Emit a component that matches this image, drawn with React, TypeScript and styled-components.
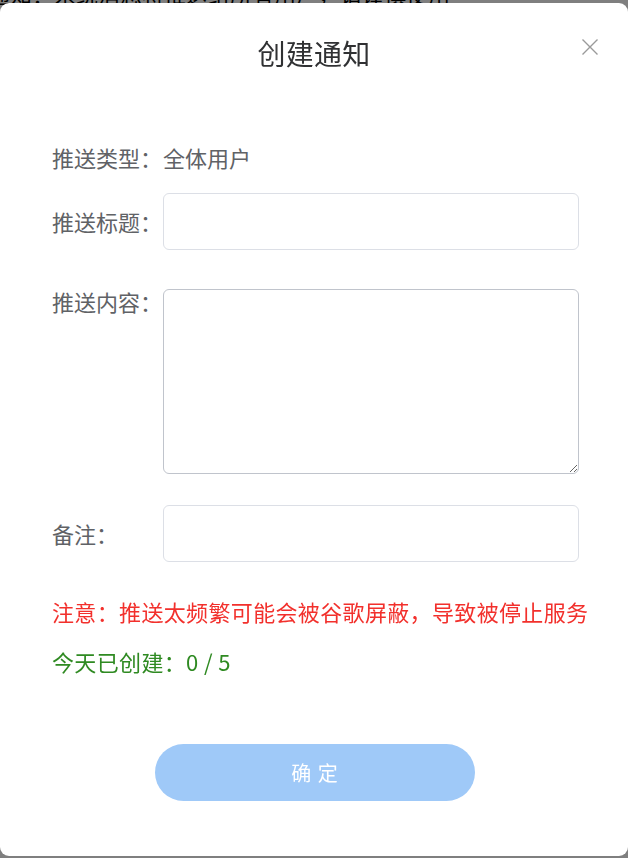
import React, { useState } from 'react';
import styled, { createGlobalStyle } from 'styled-components';

const GlobalStyle = createGlobalStyle`
  html, body {
    margin: 0;
    padding: 0;
    background: #ffffff;
  }
  body {
    font-family: "Noto Sans CJK SC", "Noto Sans", "Liberation Sans", sans-serif;
  }
  * {
    box-sizing: border-box;
  }
`;

const Page = styled.div`
  width: 628px;
  height: 858px;
  overflow: hidden;
  position: relative;
`;

const PageText = styled.div`
  margin: -18px 0 0 -12px;
  font-size: 22px;
  line-height: 22px;
  color: #000;
  white-space: nowrap;
`;

const Overlay = styled.div`
  position: fixed;
  inset: 0;
  background: rgba(0, 0, 0, 0.5);
`;

const Dialog = styled.div`
  position: fixed;
  top: 3px;
  left: 0;
  width: 628px;
  height: 853px;
  background: #ffffff;
  border-radius: 9px;
  display: flex;
  flex-direction: column;
`;

const Header = styled.div`
  position: relative;
  padding-top: 29px;
  display: flex;
  justify-content: center;
`;

const Title = styled.h2`
  margin: 0;
  font-size: 28px;
  line-height: 42px;
  font-weight: 400;
  color: #303133;
  letter-spacing: 0.3px;
`;

const CloseButton = styled.button`
  position: absolute;
  top: 32px;
  right: 26px;
  width: 24px;
  height: 24px;
  padding: 0;
  border: none;
  background: none;
  cursor: pointer;
  display: flex;
  align-items: center;
  justify-content: center;
`;

const Form = styled.div`
  padding: 68px 49px 0 52px;
  display: flex;
  flex-direction: column;
`;

const Row = styled.div<{ $mt?: number }>`
  display: flex;
  align-items: flex-start;
  margin-top: ${p => p.$mt ?? 0}px;
`;

const Label = styled.label<{ $lh?: number }>`
  width: 111px;
  flex-shrink: 0;
  font-size: 22px;
  line-height: ${p => p.$lh ?? 57}px;
  color: #606266;
`;

const Value = styled.span`
  font-size: 22px;
  line-height: 30px;
  color: #606266;
`;

const Input = styled.input`
  flex: 1;
  height: 57px;
  padding: 0 16px;
  border: 1px solid #dcdfe6;
  border-radius: 6px;
  font-size: 20px;
  font-family: inherit;
  color: #606266;
  outline: none;
`;

const TextArea = styled.textarea`
  flex: 1;
  display: block;
  height: 185px;
  padding: 10px 16px;
  border: 1px solid #c0c4cc;
  border-radius: 6px;
  font-size: 20px;
  font-family: inherit;
  color: #606266;
  outline: none;
  resize: vertical;
`;

const Note = styled.p<{ $color: string; $mt: number }>`
  margin: ${p => p.$mt}px 0 0;
  font-size: 22px;
  line-height: 30px;
  letter-spacing: 0.35px;
  color: ${p => p.$color};
  white-space: nowrap;
`;

const Footer = styled.div`
  margin-top: 68px;
  display: flex;
  justify-content: center;
  padding-left: 2px;
`;

const SubmitButton = styled.button`
  width: 320px;
  height: 57px;
  border: none;
  border-radius: 29px;
  background: #9fc9f8;
  color: #ffffff;
  font-size: 20px;
  font-family: inherit;
  letter-spacing: 1px;
  cursor: not-allowed;
`;

const CloseIcon = () => (
  <svg width="18" height="18" viewBox="0 0 18 18">
    <path d="M1.5 1.5 L16.5 16.5 M16.5 1.5 L1.5 16.5" stroke="#9a9a9a" strokeWidth="1.4" fill="none" />
  </svg>
);

export default function App() {
  const [title, setTitle] = useState('');
  const [content, setContent] = useState('');
  const [remark, setRemark] = useState('');

  return (
    <Page>
      <GlobalStyle />
      <PageText>通知：系统消息将推送给所有用户，请谨慎使用</PageText>
      <Overlay />
      <Dialog>
        <Header>
          <Title>创建通知</Title>
          <CloseButton aria-label="关闭">
            <CloseIcon />
          </CloseButton>
        </Header>

        <Form>
          <Row>
            <Label $lh={30}>推送类型：</Label>
            <Value>全体用户</Value>
          </Row>
          <Row $mt={21}>
            <Label>推送标题：</Label>
            <Input value={title} onChange={e => setTitle(e.target.value)} />
          </Row>
          <Row $mt={39}>
            <Label $lh={24}>推送内容：</Label>
            <TextArea value={content} onChange={e => setContent(e.target.value)} />
          </Row>
          <Row $mt={31}>
            <Label>备注：</Label>
            <Input value={remark} onChange={e => setRemark(e.target.value)} />
          </Row>

          <Note $color="#f2302c" $mt={34}>注意：推送太频繁可能会被谷歌屏蔽，导致被停止服务</Note>
          <Note $color="#2f8a22" $mt={20}>今天已创建：0 / 5</Note>
        </Form>

        <Footer>
          <SubmitButton disabled>确 定</SubmitButton>
        </Footer>
      </Dialog>
    </Page>
  );
}
